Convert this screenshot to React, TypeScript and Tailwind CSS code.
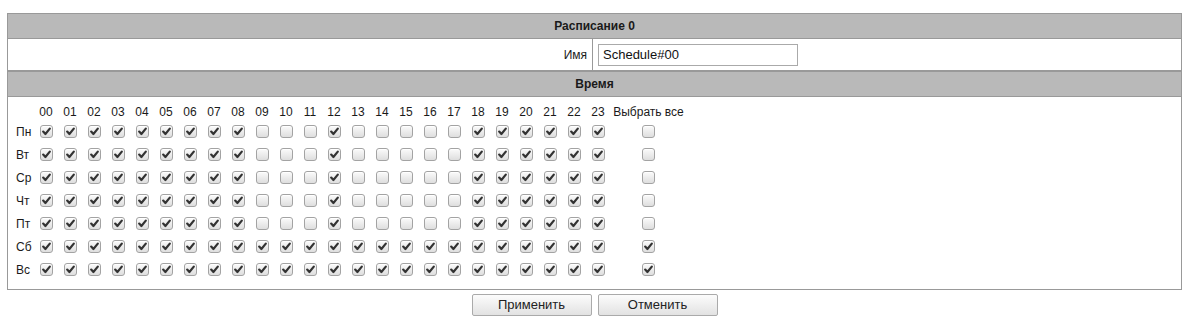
import React from "react";

const hours = Array.from({ length: 24 }, (_, i) => String(i).padStart(2, "0"));
const days = ["Пн", "Вт", "Ср", "Чт", "Пт", "Сб", "Вс"];

const weekdayOn = (h: number) => h <= 8 || h === 12 || h >= 18;

function Box({ checked }: { checked: boolean }) {
  return (
    <span className="inline-flex h-[13px] w-[13px] items-center justify-center rounded-[3px] border border-[#a3a3a3] bg-gradient-to-b from-[#fbfbfb] to-[#dedede] shadow-[inset_0_1px_0_#fff]">
      {checked && (
        <svg width="9" height="9" viewBox="0 0 9 9">
          <path d="M1.2 4.6 L3.4 7 L7.8 1.6" fill="none" stroke="#333" strokeWidth="2.2" strokeLinecap="round" strokeLinejoin="round" />
        </svg>
      )}
    </span>
  );
}

export default function App() {
  return (
    <div className="bg-white pt-[13px] text-[12px] text-[#1a1a1a]" style={{ fontFamily: '"Liberation Sans", Arial, sans-serif' }}>
      <div className="ml-[7px] w-[1175px] border border-[#999]">
        <div className="flex h-[25px] items-center justify-center border-b border-[#999] bg-[#b9b9b9] font-bold">
          Расписание 0
        </div>
        <div className="flex h-[32px] border-b border-[#999]">
          <div className="flex w-[585px] items-center justify-end border-r border-[#999] pr-[5px]">Имя</div>
          <div className="flex items-center pl-[5px]">
            <input
              readOnly
              value="Schedule#00"
              className="h-[22px] w-[200px] border border-[#aaa] px-[4px] text-[13px] text-[#111] outline-none"
              style={{ fontFamily: '"Liberation Sans", Arial, sans-serif' }}
            />
          </div>
        </div>
        <div className="flex h-[26px] items-center justify-center border-y border-[#999] bg-[#b9b9b9] font-bold">
          Время
        </div>
        <div className="pb-[8px] pl-[8px] pt-[6px]">
          <div className="grid grid-cols-[18px_repeat(24,24px)_77px] grid-rows-[17px_repeat(7,23px)]">
            <div />
            {hours.map((h) => (
              <div key={h} className="flex items-center justify-center">
                {h}
              </div>
            ))}
            <div className="flex items-center justify-center whitespace-nowrap">Выбрать все</div>
            {days.map((d, di) => {
              const weekend = di >= 5;
              return (
                <React.Fragment key={d}>
                  <div className="flex items-center">{d}</div>
                  {hours.map((h, hi) => (
                    <div key={h} className="flex items-center justify-center">
                      <Box checked={weekend || weekdayOn(hi)} />
                    </div>
                  ))}
                  <div className="flex items-center justify-center">
                    <Box checked={weekend} />
                  </div>
                </React.Fragment>
              );
            })}
          </div>
        </div>
      </div>
      <div className="ml-[7px] mt-[4px] flex w-[1175px] justify-center gap-[6px]">
        <button className="h-[22px] w-[120px] rounded-[2px] border border-[#aaa] bg-gradient-to-b from-[#fcfcfc] to-[#e2e2e2] text-[13px] text-[#222]">
          Применить
        </button>
        <button className="h-[22px] w-[120px] rounded-[2px] border border-[#aaa] bg-gradient-to-b from-[#fcfcfc] to-[#e2e2e2] text-[13px] text-[#222]">
          Отменить
        </button>
      </div>
    </div>
  );
}
